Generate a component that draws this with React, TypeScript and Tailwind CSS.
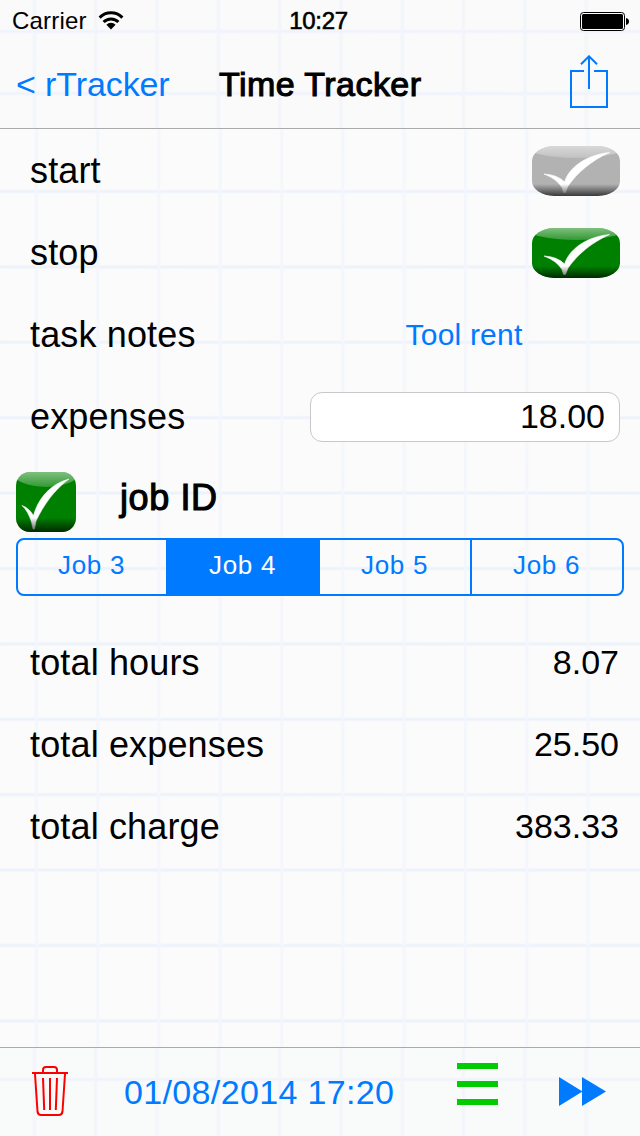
import type { ReactNode } from "react";

const JOBS = [
  { name: "Job 3", width: "w-[148px]" },
  { name: "Job 4", width: "w-[154px]" },
  { name: "Job 5", width: "w-[150px]" },
  { name: "Job 6", width: "w-[152px] border-l-2 border-[#007aff]" },
];
const SELECTED_JOB = "Job 4";

const TOTALS = [
  { label: "total hours", value: "8.07" },
  { label: "total expenses", value: "25.50" },
  { label: "total charge", value: "383.33" },
];

function WifiIcon() {
  return (
    <svg width="26" height="20" viewBox="0 0 26 20" className="ml-[11px]">
      <g fill="none" stroke="#000" strokeWidth="3">
        <path d="M1.6 6.6a16 16 0 0 1 22.8 0" />
        <path d="M5.6 11a10.400 10.400 0 0 1 14.800 0" />
      </g>
      <path d="M8.4 13.800a6.400 6.400 0 0 1 9.200 0L13 18.500z" />
    </svg>
  );
}

function BatteryIcon() {
  return (
    <svg width="49" height="20" viewBox="0 0 49 20">
      <rect x="0.5" y="1.5" width="44" height="18" rx="3" fill="#fff" stroke="#000" />
      <rect x="2" y="3" width="41" height="15" rx="1.5" />
      <path d="M46 7q3 .8 3 3.500t-3 3.500z" />
    </svg>
  );
}

function ShareIcon() {
  return (
    <svg width="38" height="53" viewBox="0 0 38 53" fill="none" stroke="#007aff" strokeWidth="2">
      <path d="M14 16H1v36h36V16H24" />
      <path d="M19 34V2M11 9.3l8-8 8 8" />
    </svg>
  );
}

function CheckBadge({ id, color, square = false }: { id: string; color: string; square?: boolean }) {
  const w = square ? 60 : 88;
  const h = square ? 60 : 50;
  return (
    <svg width={w} height={h} viewBox={`0 0 ${w} ${h}`}>
      <defs>
        <linearGradient id={`${id}-shine`} x1="0" y1=".5" x2="0" y2="1">
          <stop offset="0" stopColor="#fff" stopOpacity=".5" />
          <stop offset="1" stopColor="#fff" stopOpacity=".2" />
        </linearGradient>
        <linearGradient id={`${id}-shade`} x1="0" y1="0" x2="0" y2="1">
          <stop offset=".76" stopColor="#000" stopOpacity="0" />
          <stop offset="1" stopColor="#000" stopOpacity=".68" />
        </linearGradient>
        <clipPath id={`${id}-clip`}>
          <rect width={w} height={h} rx={square ? 14 : 22} ry={square ? 14 : 15} />
        </clipPath>
      </defs>
      <g clipPath={`url(#${id}-clip)`}>
        <rect width={w} height={h} fill={color} />
        {square ? (
          <>
            <ellipse cx="30" cy="0" rx="34" ry="15" fill={`url(#${id}-shine)`} />
            <path d="M6 33.500Q13 36 17.500 43.500C22 27 34 12 53 7C38 18 27 34 20 49L18.500 57H17L15.500 50Q12 39 6 33.500Z" fill="#fff" stroke="#fff" strokeWidth=".6" />
          </>
        ) : (
          <>
            <ellipse cx="44" cy="0" rx="50" ry="12" fill={`url(#${id}-shine)`} />
            <path d="M12 28Q25 28.500 32.500 36C37 22 53 9 77.500 6.500C59 15 46 26 36 40L33.500 46.500H31.500L30 41.500Q25 33 12 28Z" fill="#fff" stroke="#fff" strokeWidth=".6" />
          </>
        )}
        <rect width={w} height={h} fill={`url(#${id}-shade)`} />
      </g>
    </svg>
  );
}

function TrashIcon() {
  return (
    <svg width="36" height="51" viewBox="0 0 36 51" fill="none" stroke="#f00" strokeWidth="2">
      <path d="M0 7h36" />
      <path d="M11 7V4q0-3 3-3h8q3 0 3 3v3" />
      <path d="M3 8l2.500 37.500Q6 49 9 49h18q3 0 3.500-3.500L33 8" />
      <path d="M11 12l1.200 32M18 12v32M25 12l-1.200 32" />
    </svg>
  );
}

function Row({ label, children }: { label: string; children: ReactNode }) {
  return (
    <div className="flex h-[82px] items-center justify-between pr-5 pl-[30px]">
      <span className="text-[36px] leading-[40px] tracking-[0.15px]">{label}</span>
      {children}
    </div>
  );
}

const PAPER =
  "bg-[#fbfbfb] bg-[image:linear-gradient(90deg,transparent_34px,#f3f6fc_36px,#f3f6fc_37px,transparent_39px),linear-gradient(180deg,transparent_60px,#edf2fb_62px,#edf2fb_63px,transparent_65px)] bg-[size:61.3px_75.4px]";
const BAR_TOP =
  "bg-[#fafafa] bg-[image:linear-gradient(90deg,transparent_32px,#f2f5fb_34px,#f2f5fb_35px,transparent_37px),linear-gradient(180deg,transparent_29px,#eff3fb_31px,#eff3fb_32px,transparent_34px)] bg-[size:61.3px_62px]";
const BAR_BOTTOM =
  "bg-[#f9fafa] bg-[image:linear-gradient(90deg,transparent_32px,#f2f5fb_34px,#f2f5fb_35px,transparent_37px),linear-gradient(180deg,transparent_29px,#eff3fb_31px,#eff3fb_32px,transparent_34px)] bg-[size:61.3px_100px]";

export default function App() {
  return (
    <div className="flex h-[1136px] w-[640px] flex-col overflow-hidden font-['Liberation_Sans',Arial,sans-serif] text-black">
      <header className={`h-[129px] shrink-0 border-b border-[#a9abab] ${BAR_TOP}`}>
        <div className="grid h-10 grid-cols-[1fr_auto_1fr] items-center pr-[11px] pl-3">
          <div className="flex items-center pt-px text-[24px] leading-[40px]">
            <span className="tracking-[0.2px]">Carrier</span>
            <WifiIcon />
          </div>
          <span className="pt-px pr-1 text-[24px] leading-[40px] tracking-[-0.3px] [-webkit-text-stroke:0.6px_#000]">
            10:27
          </span>
          <div className="flex justify-end">
            <BatteryIcon />
          </div>
        </div>
        <div className="grid h-[88px] grid-cols-[203px_1fr_70px] items-center pr-8 pl-4">
          <button className="text-left text-[34px] leading-[40px] tracking-[-0.1px] text-[#007aff]">&lt; rTracker</button>
          <h1 className="text-[34px] leading-[40px] tracking-[0.45px] [-webkit-text-stroke:1.1px_#000]">Time Tracker</h1>
          <button className="flex justify-end pb-[6px]">
            <ShareIcon />
          </button>
        </div>
      </header>

      <main className={`flex-1 pt-px ${PAPER}`}>
        <Row label="start">
          <CheckBadge id="start" color="#b2b2b2" />
        </Row>
        <Row label="stop">
          <CheckBadge id="stop" color="#008000" />
        </Row>
        <Row label="task notes">
          <span className="w-[312px] text-center text-[30px] leading-[36px] tracking-[0.2px] text-[#007aff]">Tool rent</span>
        </Row>
        <Row label="expenses">
          <div className="h-[50px] w-[310px] rounded-[12px] border border-[#c8c8c8] bg-white pr-[14px] text-right text-[34px] leading-[47px]">
            18.00
          </div>
        </Row>
        <div className="flex h-[80px] items-start gap-[44px] pt-[14px] pl-4">
          <CheckBadge id="job" color="#008000" square />
          <span className="pt-[6px] text-[36px] leading-[40px] tracking-[0.6px] [-webkit-text-stroke:1.1px_#000]">
            job ID
          </span>
        </div>
        <div className="mx-4 flex h-[58px] overflow-hidden rounded-[8px] border-2 border-[#007aff]">
          {JOBS.map((job) => (
            <button
              key={job.name}
              className={`${job.width} pr-px pb-1 text-center text-[26px] leading-[50px] tracking-[0.7px] ${
                job.name === SELECTED_JOB ? "bg-[#007aff] text-white" : "text-[#007aff]"
              }`}
            >
              {job.name}
            </button>
          ))}
        </div>
        <div className="pt-[26px]">
          {TOTALS.map((t) => (
            <Row key={t.label} label={t.label}>
              <span className="pr-px pb-[2px] text-[34px] leading-[40px]">{t.value}</span>
            </Row>
          ))}
        </div>
      </main>

      <footer className={`flex h-[89px] shrink-0 items-start border-t border-[#a9abab] pl-8 ${BAR_BOTTOM}`}>
        <button className="pt-[18px]">
          <TrashIcon />
        </button>
        <button className="ml-14 w-[272px] pt-6 text-left text-[34px] leading-[40px] tracking-[0.35px] whitespace-nowrap text-[#007aff]">
          01/08/2014 17:20
        </button>
        <button className="ml-[61px] flex flex-col gap-3 pt-[15px]">
          <span className="h-[6px] w-[41px] bg-[#00cc00]" />
          <span className="h-[6px] w-[41px] bg-[#00cc00]" />
          <span className="h-[6px] w-[41px] bg-[#00cc00]" />
        </button>
        <button className="ml-[61px] pt-[29px]">
          <svg width="47" height="29" viewBox="0 0 47 29" fill="#007aff">
            <path d="M0 0l23.500 14.500L0 29zM23 0l24 14.500L23 29z" />
          </svg>
        </button>
      </footer>
    </div>
  );
}
